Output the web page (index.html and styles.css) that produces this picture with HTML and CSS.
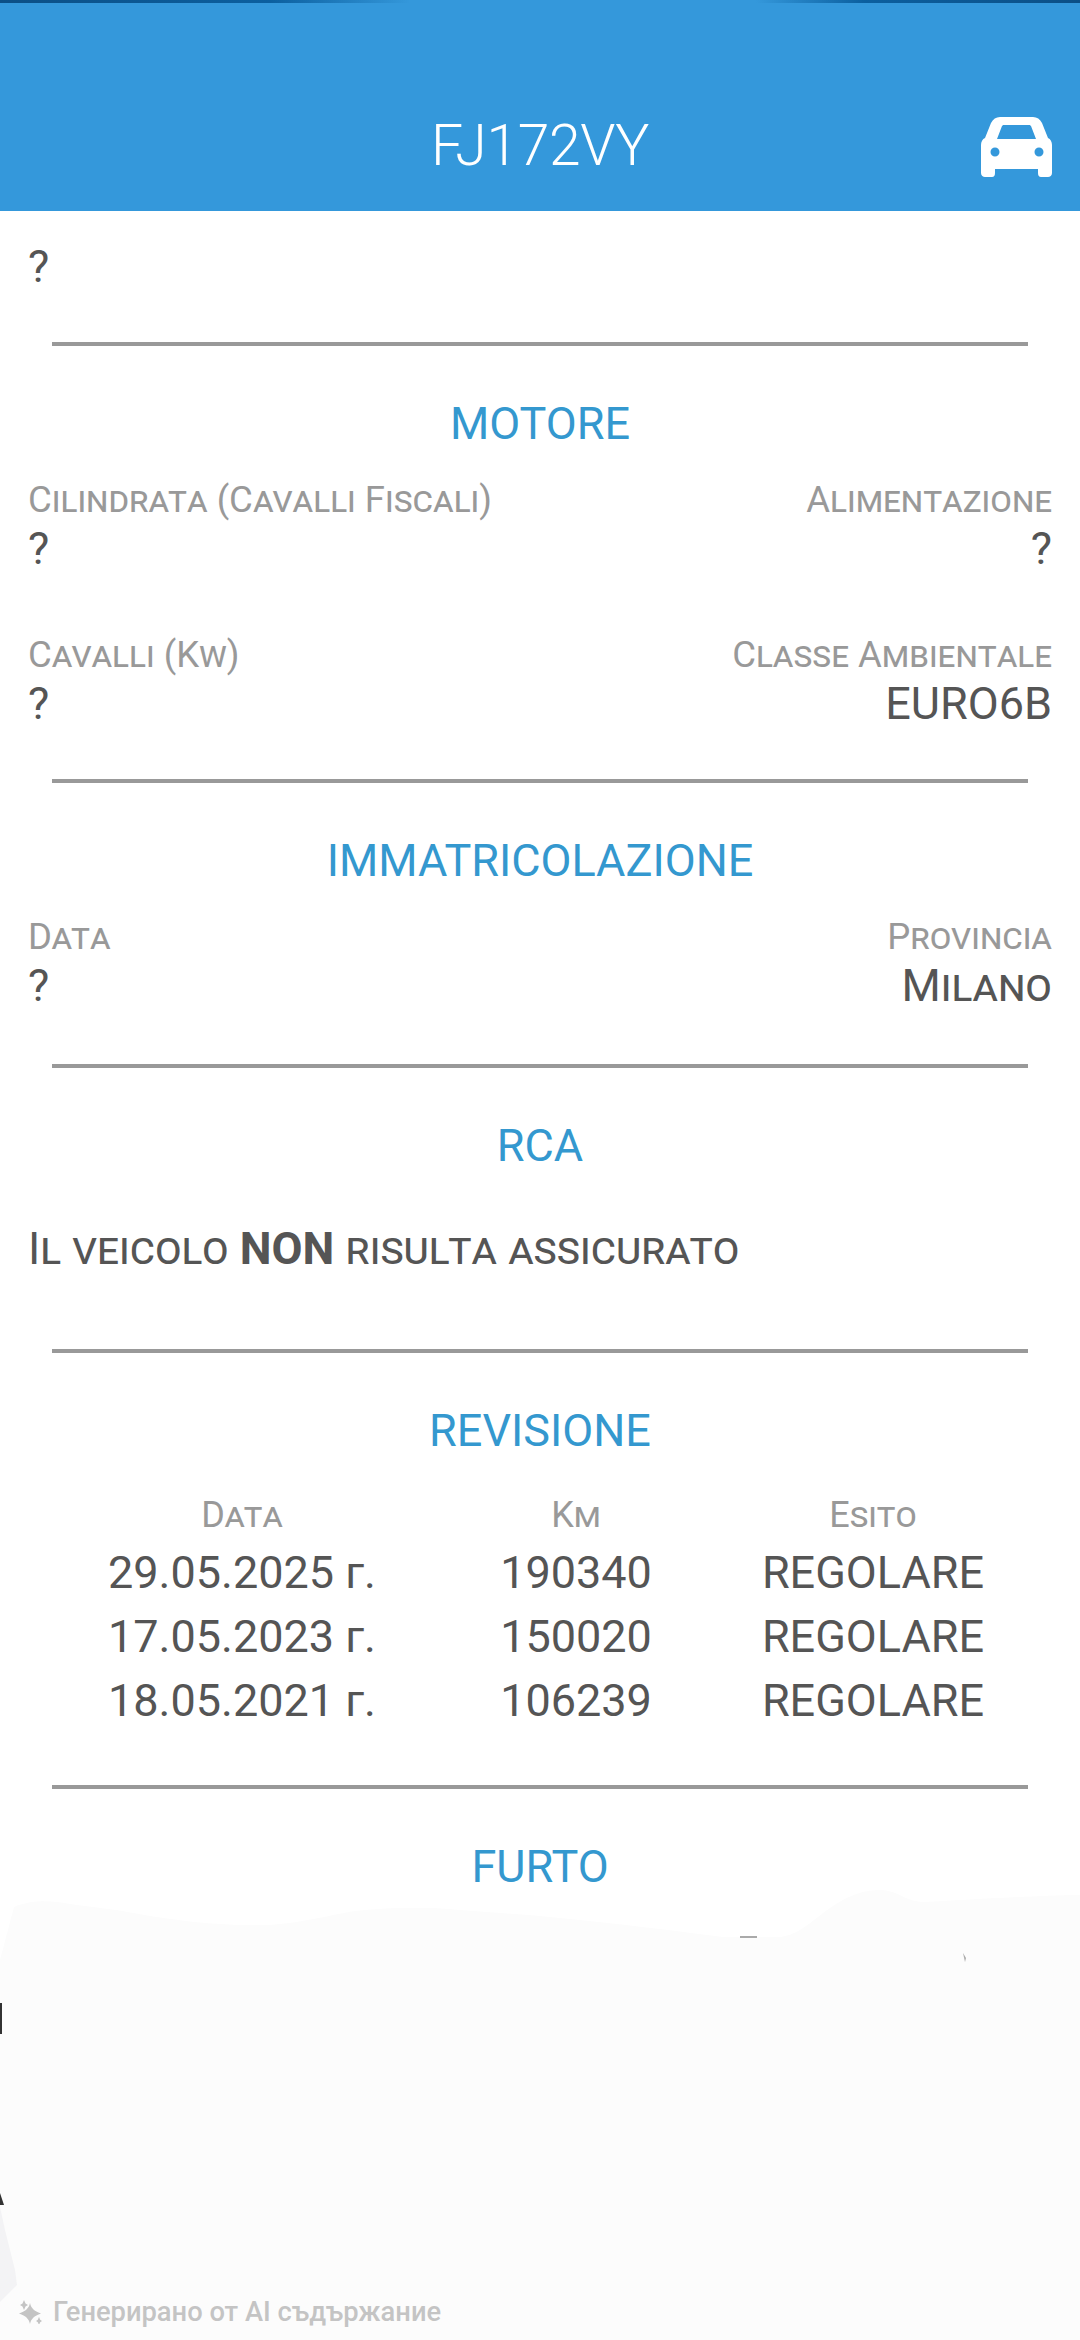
FILE: index.html
```html
<!DOCTYPE html>
<html lang="it">
<head>
<meta charset="utf-8">
<title>FJ172VY</title>
<link rel="stylesheet" href="styles.css">
</head>
<body>
<div class="page">
  <svg class="smudge" viewBox="0 0 1080 460" aria-hidden="true">
    <path class="smudge-fill" d="M0 460V80L14 27C30 20 50 20 70 24C100 28 120 30 150 36C200 44 240 46 270 45C310 42 340 32 365 30C400 27 430 27 460 30C500 33 530 35 560 38C620 44 670 50 723 57H780C800 55 815 38 830 28C850 14 865 10 881 10C900 11 905 22 925 22C960 20 1020 16 1080 15V460Z"/>
    <path class="smudge-grey" d="M0 327L5 350L15 390L17 405L0 422Z"/>
    <path class="smudge-dark" d="M0 123H2V154H0Z"/>
    <path class="smudge-dark" d="M0 313L4 325H0Z"/>
    <path class="smudge-mid" d="M740 56H757V58H740Z"/>
    <path class="smudge-mid" d="M963 73L966 78L965 82Z"/>
  </svg>
  <header class="topbar">
    <div class="topbar-edge"></div>
    <h1 class="plate">FJ172VY</h1>
    <svg class="car" viewBox="0 0 71 60" aria-hidden="true">
      <path fill-rule="evenodd" d="M19 0H52C56 0 59 2 61 6L67 21C69.500 22 71 25 71 28V56C71 58.500 69 60 67 60H60C58 60 57 58.500 57 56V52H14V56C14 58.500 13 60 11 60H4C2 60 0 58.500 0 56V28C0 25 1.500 22 4 21L10 6C12 2 15 0 19 0ZM21 9L16 22H55L50 9C49.500 8.500 49 8 48 8H23C22 8 21.500 8.500 21 9ZM14 30.500A4.500 4.500 0 1 0 14 39.500A4.500 4.500 0 1 0 14 30.500ZM58 30.500A4.500 4.500 0 1 0 58 39.500A4.500 4.500 0 1 0 58 30.500Z"/>
    </svg>
  </header>

  <main class="content">
    <div class="intro value">?</div>
    <hr class="rule">

    <section class="section">
      <h2 class="section-title">MOTORE</h2>
      <div class="pairs">
        <div class="field"><div class="label">Cilindrata (Cavalli Fiscali)</div><div class="value">?</div></div>
        <div class="field end"><div class="label">Alimentazione</div><div class="value">?</div></div>
        <div class="field"><div class="label">Cavalli (Kw)</div><div class="value">?</div></div>
        <div class="field end"><div class="label">Classe Ambientale</div><div class="value">EURO6B</div></div>
      </div>
    </section>
    <hr class="rule">

    <section class="section">
      <h2 class="section-title">IMMATRICOLAZIONE</h2>
      <div class="pairs pairs-single">
        <div class="field"><div class="label">Data</div><div class="value">?</div></div>
        <div class="field end"><div class="label">Provincia</div><div class="value caps">Milano</div></div>
      </div>
    </section>
    <hr class="rule">

    <section class="section">
      <h2 class="section-title">RCA</h2>
      <p class="notice">Il veicolo <strong>NON</strong> risulta assicurato</p>
    </section>
    <hr class="rule">

    <section class="section">
      <h2 class="section-title">REVISIONE</h2>
      <div class="table">
        <div class="label">Data</div><div class="label">Km</div><div class="label">Esito</div>
        <div class="value">29.05.2025 г.</div><div class="value">190340</div><div class="value">REGOLARE</div>
        <div class="value">17.05.2023 г.</div><div class="value">150020</div><div class="value">REGOLARE</div>
        <div class="value">18.05.2021 г.</div><div class="value">106239</div><div class="value">REGOLARE</div>
      </div>
    </section>
    <hr class="rule">

    <section class="section">
      <h2 class="section-title">FURTO</h2>
    </section>
  </main>

  <footer class="ai-note">
    <svg class="sparkle" viewBox="0 0 24 24" aria-hidden="true">
      <path d="M12 3C13 8 16 11 23 13.500C16 16 13 19 12 24C11 19 8 16 1 13.500C8 11 11 8 12 3Z"/>
      <path d="M6 0L7.500 3.500L10 5L7.500 6.500L6 10L4.500 6.500L2 5L4.500 3.500Z"/>
      <path d="M21 17L22.200 19.800L24 21L22.200 22.200L21 25L19.800 22.200L18 21L19.800 19.800Z"/>
    </svg>
    <span>Генерирано от AI съдържание</span>
  </footer>
</div>
</body>
</html>
```
FILE: styles.css
```css
* { box-sizing: border-box; }
html, body { margin: 0; padding: 0; background: #fff; }
body { font-family: Roboto, "Noto Sans", sans-serif; }

.page {
  position: relative;
  width: 1080px;
  height: 2340px;
  overflow: hidden;
  display: flex;
  flex-direction: column;
  background: #fff;
}

.smudge { position: absolute; left: 0; top: 1880px; width: 1080px; height: 460px; }
.smudge-fill { fill: #fcfcfc; }
.smudge-grey { fill: #f3f3f5; }
.smudge-dark { fill: #333; }
.smudge-mid { fill: #aaa; }

.topbar {
  position: relative;
  flex: none;
  height: 211px;
  background: #3498db;
  display: flex;
  align-items: flex-end;
  justify-content: center;
  padding-bottom: 27px;
}
.topbar-edge {
  position: absolute;
  left: 0; right: 0; top: 0;
  height: 3px;
  background: linear-gradient(90deg, #0b4f86 0, #0b5f9f 25%, #3498db 38%, #3498db 70%, #0b5f9f 80%, #0b4f86 100%);
}
.plate {
  margin: 0;
  font-size: 57px;
  line-height: 76px;
  font-weight: 350;
  letter-spacing: -0.300px;
  color: #fff;
}
.car {
  position: absolute;
  left: 981px;
  top: 117px;
  width: 71px;
  height: 60px;
  fill: #fff;
}

.content { position: relative; flex: 1; padding: 0 28px; }

.intro { height: 131px; padding-top: 32px; }

.rule {
  display: block;
  height: 4px;
  margin: 0 24px;
  border: 0;
  background: #999;
}

.section { padding-top: 46px; }
.section-title {
  margin: 0 0 21px;
  font-size: 45px;
  line-height: 64px;
  font-weight: 400;
  text-align: center;
  color: #3498cf;
}

.pairs {
  display: grid;
  grid-template-columns: 1fr 1fr;
  row-gap: 59px;
  padding-bottom: 51px;
}
.pairs-single { padding-bottom: 54px; }
.field.end { text-align: right; }
.field .label { line-height: 46px; padding-bottom: 2px; }

.label {
  font-size: 36.500px;
  line-height: 48px;
  font-variant: small-caps;
  color: #999;
}
.value {
  font-size: 45px;
  line-height: 48px;
  color: #555;
}
.caps { font-variant: small-caps; }

.notice {
  margin: 0;
  height: 150px;
  padding-top: 20px;
  font-size: 45px;
  line-height: 60px;
  font-variant: small-caps;
  color: #555;
}
.notice strong { font-weight: 700; }

.table {
  display: grid;
  grid-template-columns: 428px 240px 354px;
  grid-template-rows: 52px 64px 64px 64px;
  text-align: center;
  align-items: center;
  padding-top: 5px;
  padding-bottom: 52px;
}
.table .label { font-size: 36px; }

.ai-note {
  position: relative;
  flex: none;
  display: flex;
  align-items: center;
  gap: 11px;
  height: 40px;
  margin-bottom: 8px;
  padding-left: 18px;
  font-size: 27.300px;
  font-weight: 500;
  color: #c4c4c4;
}
.sparkle { width: 24px; height: 24px; fill: #c4c4c4; }
```
